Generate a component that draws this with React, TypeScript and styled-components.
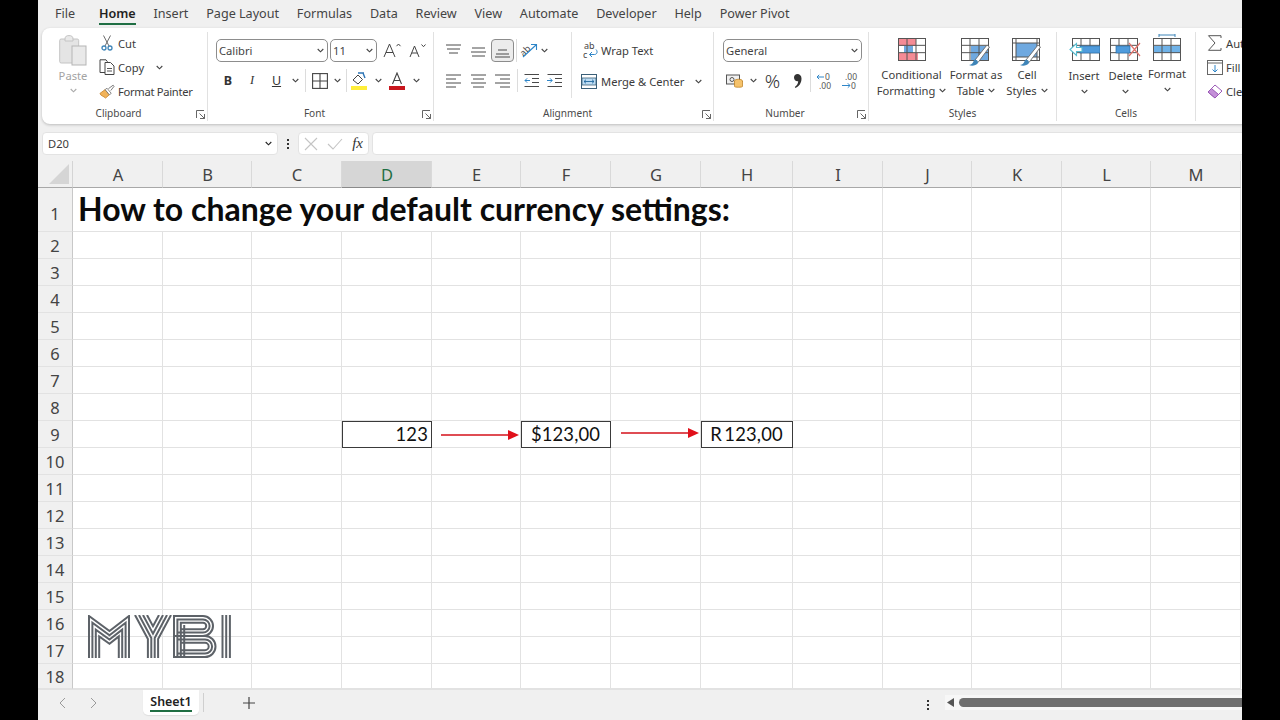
import React from "react";
import styled, { createGlobalStyle } from "styled-components";

const UI_FONT = `"Noto Sans", "Open Sans", sans-serif`;
const SHEET_FONT = `Lato, "Liberation Sans", sans-serif`;

const GlobalStyle = createGlobalStyle`
  html, body {
    margin: 0;
    height: 100%;
    background: #000;
    overflow: hidden;
  }
  * { box-sizing: border-box; }
`;

const Frame = styled.div`
  width: 1204px;
  height: 720px;
  margin-left: 38px;
  background: #f0f0f0;
  display: flex;
  flex-direction: column;
  overflow: hidden;
  font-family: ${UI_FONT};
  color: #3b3b3b;
`;

/* ---------- tabs ---------- */
const TabBar = styled.nav`
  height: 28px;
  flex: none;
  display: flex;
  gap: 17.8px;
  padding-left: 17px;
  align-items: stretch;
`;

const Tab = styled.div<{ $active?: boolean }>`
  font-size: 12.6px;
  line-height: 28px;
  white-space: nowrap;
  position: relative;
  font-weight: ${(p) => (p.$active ? 600 : 400)};
  color: ${(p) => (p.$active ? "#1f1f1f" : "#444")};
  &:first-child {
    margin-right: 6px;
  }
  &::after {
    content: "";
    display: ${(p) => (p.$active ? "block" : "none")};
    position: absolute;
    left: 0;
    right: 0;
    bottom: 3px;
    height: 2px;
    background: #1f6e43;
  }
`;

/* ---------- ribbon ---------- */
const Ribbon = styled.div`
  height: 96px;
  flex: none;
  width: 1240px;
  margin-left: 4px;
  padding: 4px 0 3px;
  display: flex;
  background: #fff;
  border-radius: 8px 0 0 8px;
  box-shadow: 0 1px 3px rgba(0, 0, 0, 0.22);
`;

const Group = styled.section<{ $w: number; $last?: boolean }>`
  width: ${(p) => p.$w}px;
  flex: none;
  display: flex;
  flex-direction: column;
  position: relative;
  border-right: ${(p) => (p.$last ? "none" : "1px solid #e1e1e1")};
`;

const GroupBody = styled.div<{ $pad?: number }>`
  flex: 1;
  min-height: 0;
  display: flex;
  padding-left: ${(p) => p.$pad ?? 0}px;
`;

const GroupLabel = styled.div<{ $launcher?: boolean }>`
  height: 17px;
  flex: none;
  padding-right: ${(p) => (p.$launcher ? 12 : 0)}px;
  padding-top: 1px;
  text-align: center;
  font-size: 10.1px;
  line-height: 17px;
  color: #4a4a4a;
`;

const Launcher = styled.span`
  position: absolute;
  right: 2px;
  bottom: 2px;
  width: 9px;
  height: 9px;
  display: flex;
`;

const PasteColumn = styled.div`
  width: 40px;
  display: flex;
  flex-direction: column;
  align-items: center;
  padding-top: 3px;
  color: #a3a3a3;
  font-size: 11.2px;
  line-height: 15px;
`;

const PasteText = styled.div`
  margin-top: 2px;
  margin-bottom: 5px;
`;

const ClipList = styled.div`
  margin: -1px 0 0 6px;
  display: flex;
  flex-direction: column;
`;

const ClipRow = styled.div`
  height: 24.5px;
  display: flex;
  align-items: center;
  gap: 3px;
  font-size: 11.2px;
  white-space: nowrap;
`;

const TightText = styled.span`
  letter-spacing: -0.3px;
`;

const ClipIcon = styled.span`
  width: 16px;
  height: 18px;
  display: flex;
  align-items: center;
  justify-content: center;
  flex: none;
`;

const Stack = styled.div<{ $pad?: number; $w?: number; $bordered?: boolean }>`
  display: flex;
  flex-direction: column;
  padding-top: 7px;
  padding-left: ${(p) => p.$pad ?? 0}px;
  width: ${(p) => (p.$w ? `${p.$w}px` : "auto")};
  height: ${(p) => (p.$bordered ? "66px" : "auto")};
  border-right: ${(p) => (p.$bordered ? "1px solid #e1e1e1" : "none")};
`;

const ToolRow = styled.div`
  height: 23px;
  display: flex;
  align-items: center;
  & + & {
    margin-top: 7px;
  }
`;

const Slot = styled.span<{ $w: number; $size?: number; $weight?: number; $italic?: boolean; $font?: string }>`
  width: ${(p) => p.$w}px;
  height: 23px;
  flex: none;
  display: flex;
  align-items: center;
  justify-content: center;
  font-size: ${(p) => p.$size ?? 12}px;
  font-weight: ${(p) => p.$weight ?? 400};
  font-style: ${(p) => (p.$italic ? "italic" : "normal")};
  font-family: ${(p) => p.$font ?? "inherit"};
  color: #333;
`;

const ActiveSlot = styled(Slot)`
  background: #ececec;
  border: 1px solid #8c8c8c;
  border-radius: 4px;
`;

const VRule = styled.span`
  width: 1px;
  height: 23px;
  background: #dcdcdc;
`;

const Select = styled.div<{ $w: number }>`
  width: ${(p) => p.$w}px;
  height: 23px;
  flex: none;
  padding: 0 3px 0 2px;
  display: flex;
  align-items: center;
  justify-content: space-between;
  border: 1px solid #8d8d8d;
  border-radius: 5px;
  background: #fff;
  font-size: 11.2px;
  color: #444;
`;

const WideRow = styled.div<{ $lead: number }>`
  height: 23px;
  display: flex;
  align-items: center;
  padding-left: ${(p) => p.$lead}px;
  font-size: 11.2px;
  white-space: nowrap;
  & + & {
    margin-top: 8px;
  }
`;

const WideText = styled.span<{ $left: number }>`
  margin-left: ${(p) => p.$left}px;
`;

const BigButton = styled.div<{ $w: number; $top?: number; $labelGap?: number }>`
  width: ${(p) => p.$w}px;
  flex: none;
  display: flex;
  flex-direction: column;
  align-items: center;
  padding-top: ${(p) => p.$top ?? 6}px;
  font-size: 11.2px;
  line-height: 15.5px;
  white-space: nowrap;
  text-align: center;
  & > svg {
    flex: none;
    margin-bottom: ${(p) => p.$labelGap ?? 5}px;
  }
`;

const BigChevron = styled.div`
  height: 15px;
  display: flex;
  align-items: center;
  justify-content: center;
  gap: 4px;
`;

const InlineLabel = styled.div`
  display: flex;
  align-items: center;
  gap: 4px;
`;

/* ---------- formula bar ---------- */
const FormulaBar = styled.div`
  height: 23px;
  flex: none;
  margin-top: 8px;
  padding-left: 4px;
  display: flex;
  align-items: stretch;
`;

const Field = styled.div<{ $w: string }>`
  width: ${(p) => p.$w};
  flex: none;
  background: #fff;
  border: 1px solid #e3e3e3;
  border-radius: 4px;
  display: flex;
  align-items: center;
  justify-content: space-between;
  font-size: 11.2px;
  padding: 0 5px;
`;

const Kebab = styled.div`
  width: 20px;
  flex: none;
  align-self: stretch;
  display: flex;
  flex-direction: column;
  align-items: center;
  justify-content: center;
  gap: 2px;
  & > i {
    width: 2px;
    height: 2px;
    background: #333;
  }
`;

const FormulaTail = styled(Field)`
  margin-left: 3px;
  border-radius: 4px 0 0 4px;
`;

const Fx = styled.span`
  font-family: "Liberation Serif", serif;
  font-style: italic;
  font-size: 15px;
  color: #333;
`;

/* ---------- sheet ---------- */
const COLUMNS = ["A", "B", "C", "D", "E", "F", "G", "H", "I", "J", "K", "L", "M"];
const WIDTHS = [90, 89, 90, 90, 89, 90, 90, 92, 90, 89, 90, 89, 90];
const TEMPLATE = `35px ${WIDTHS.map((w) => `${w}px`).join(" ")}`;
const ROW_HEIGHTS = `27px 44px repeat(16, 27px) 25px`;

const Sheet = styled.div`
  margin-top: 6px;
  height: 528px;
  flex: none;
  position: relative;
  display: grid;
  grid-template-columns: ${TEMPLATE};
  grid-template-rows: ${ROW_HEIGHTS};
  background: #fff;
  overflow: hidden;
`;

const Corner = styled.div`
  background: #f0f0f0;
  border-right: 1px solid #d4d4d4;
  border-bottom: 1px solid #a8a8a8;
  position: relative;
  &::after {
    content: "";
    position: absolute;
    right: 3px;
    bottom: 3px;
    border-style: solid;
    border-width: 0 0 20px 20px;
    border-color: transparent transparent #d5d5d5 transparent;
  }
`;

const ColHead = styled.div<{ $active?: boolean }>`
  display: flex;
  align-items: center;
  justify-content: center;
  padding-left: 1px;
  font-size: 16.5px;
  background: ${(p) => (p.$active ? "#d6d6d6" : "#f0f0f0")};
  color: ${(p) => (p.$active ? "#1f6e43" : "#444")};
  border-right: 1px solid #d9d9d9;
  border-bottom: 1px solid ${(p) => (p.$active ? "#8a8a8a" : "#a8a8a8")};
`;

const RowHead = styled.div<{ $tall?: boolean }>`
  display: flex;
  align-items: center;
  justify-content: center;
  padding-top: ${(p) => (p.$tall ? 7 : 0)}px;
  font-size: 16.5px;
  background: #f0f0f0;
  color: #444;
  border-right: 1px solid #c8c8c8;
  border-bottom: 1px solid #e2e2e2;
`;

const Cell = styled.div<{ $boxed?: boolean; $align?: string }>`
  display: flex;
  align-items: center;
  justify-content: ${(p) => p.$align ?? "center"};
  padding: 0 3px;
  font-family: ${SHEET_FONT};
  font-size: 18.4px;
  letter-spacing: 0.15px;
  color: #111;
  border-right: 1px solid #e2e2e2;
  border-bottom: 1px solid #e2e2e2;
  outline: ${(p) => (p.$boxed ? "1px solid #3a3a3a" : "none")};
  outline-offset: -1px;
`;

const TitleCell = styled.div`
  grid-column: span 8;
  display: flex;
  align-items: center;
  padding: 0 5px 2px;
  font-family: ${SHEET_FONT};
  font-size: 32px;
  font-weight: 700;
  color: #0b0b0b;
  white-space: nowrap;
  border-right: 1px solid #e2e2e2;
  border-bottom: 1px solid #e2e2e2;
`;

const ArrowMark = styled.div<{ $x: number; $y: number }>`
  position: absolute;
  display: flex;
  left: ${(p) => p.$x}px;
  top: ${(p) => p.$y}px;
`;

const LogoMark = styled.svg`
  position: absolute;
  left: 50px;
  top: 454px;
`;

/* ---------- sheet tabs ---------- */
const BottomBar = styled.div`
  height: 31px;
  flex: none;
  display: flex;
  align-items: flex-start;
  background: #f0f0f0;
  border-top: 1px solid #e2e2e2;
`;

const Nav = styled.span<{ $w: number }>`
  width: ${(p) => p.$w}px;
  height: 26px;
  flex: none;
  display: flex;
  align-items: center;
  justify-content: center;
`;

const SheetTab = styled.div`
  width: 56px;
  height: 25px;
  flex: none;
  margin-left: 15px;
  background: #fff;
  border-radius: 0 0 5px 5px;
  box-shadow: 0 1px 1px rgba(0, 0, 0, 0.08);
  display: flex;
  justify-content: center;
  font-size: 12.4px;
  font-weight: 600;
  line-height: 23px;
  color: #222;
`;

const SheetTabLabel = styled.span`
  height: 22px;
  border-bottom: 2px solid #1f6e43;
`;

const TabDivider = styled.span`
  width: 1px;
  height: 19px;
  margin: 3px 0 0 4px;
  background: #cfcfcf;
`;

const ScrollTrack = styled.div`
  margin-left: 7px;
  flex: 1;
  height: 15px;
  margin-top: 5px;
  background: #f7f7f7;
  display: flex;
  align-items: center;
  padding-left: 2px;
`;

const ScrollThumb = styled.div`
  flex: 1;
  height: 9px;
  margin-left: 5px;
  border-radius: 5px 0 0 5px;
  background: #6f6f6f;
`;

/* ---------- icons ---------- */
const Chevron = ({ color = "#444" }: { color?: string }) => (
  <svg width="7" height="5" viewBox="0 0 7 5" fill="none">
    <path d="M.7 1l2.8 2.8L6.3 1" stroke={color} strokeWidth="1.1" />
  </svg>
);

const LaunchIcon = () => (
  <svg width="9" height="9" viewBox="0 0 9 9" fill="none" stroke="#555" strokeWidth=".9">
    <path d="M.5 8V.5H8M8.5 8.5H4M8.5 8.5V4M8.5 8.5L3.5 3.5" />
  </svg>
);

const PasteIcon = () => (
  <svg width="28" height="31" viewBox="0 0 28 31" fill="none">
    <rect x=".7" y="4" width="19" height="24" rx="1.5" fill="#e4e4e4" stroke="#c4c4c4" />
    <path d="M6 4c0-3 2-3.4 4-3.4s4 .4 4 3.4v2H6z" fill="#e9e9e9" stroke="#c4c4c4" />
    <rect x="13" y="11" width="14" height="19" fill="#e9e9e9" stroke="#b5b5b5" />
  </svg>
);

const ScissorsIcon = () => (
  <svg width="12" height="16" viewBox="0 0 12 16" fill="none">
    <path d="M2.5 .5L8 11M9.5 .5L4 11" stroke="#6b6b6b" strokeWidth="1" />
    <circle cx="3" cy="13" r="2" stroke="#3f85b8" strokeWidth="1.3" />
    <circle cx="9" cy="13" r="2" stroke="#3f85b8" strokeWidth="1.3" />
  </svg>
);

const CopyIcon = () => (
  <svg width="16" height="16" viewBox="0 0 16 16" fill="none" stroke="#444" strokeWidth="1">
    <path d="M6 13.5H1V.8h6l1.5 2" />
    <path d="M6 3.5h5.5l3.5 3.5v8.5H6z" fill="#fff" />
    <path d="M8 9.5h5M8 12h5" strokeWidth=".9" />
  </svg>
);

const PainterIcon = () => (
  <svg width="17" height="15" viewBox="0 0 17 15" fill="none">
    <path d="M1 9.5l5.5-4 4.5 5.5-4 3.5C5 12.5 1.5 12 1 9.5z" fill="#f1b35a" stroke="#c47f23" strokeWidth=".8" />
    <path d="M6.5 5.5l2-1.5 4.5 5.5-2 1.500z" fill="#fff" stroke="#666" strokeWidth=".8" />
    <path d="M10 4.500L15 .8l1 1.200-3.500 4.500" fill="#fff" stroke="#666" strokeWidth=".9" />
  </svg>
);

const FontGrow = ({ up }: { up: boolean }) => (
  <svg width="19" height="15" viewBox="0 0 19 15" fill="none" stroke="#444">
    <path d={up ? "M1 14L6.5 1 12 14M3 9.5h7" : "M2 14L6.5 3 11 14M3.7 10h5.6"} strokeWidth="1" />
    <path d={up ? "M13.5 3.2L15.5 1l2 2.2" : "M13.5 1.5L15.5 3.7l2-2.2"} strokeWidth="1" />
  </svg>
);

const BordersIcon = () => (
  <svg width="16" height="16" viewBox="0 0 16 16" fill="none" stroke="#444" strokeWidth="1.1">
    <rect x=".6" y=".6" width="14.8" height="14.8" />
    <path d="M8 .6v14.8M.6 8h14.8" />
  </svg>
);

const FillIcon = () => (
  <svg width="16" height="18" viewBox="0 0 16 18" fill="none">
    <path d="M2 8l5-5 4.5 4.5-4.500 4.500z" stroke="#444" strokeWidth="1" fill="#fff" />
    <path d="M7 1l6 0M12 1l2 5" stroke="#2e75b6" strokeWidth="1.4" />
    <rect y="14" width="16" height="4" fill="#ffee3a" />
  </svg>
);

const ColorAIcon = () => (
  <svg width="16" height="18" viewBox="0 0 16 18" fill="none">
    <path d="M3.500 12L8 1l4.500 11M5 8.500h6" stroke="#444" strokeWidth="1.1" />
    <rect y="14" width="16" height="4" fill="#c8161d" />
  </svg>
);

const Lines = ({ ys, widths }: { ys: number[]; widths: [number, number][] }) => (
  <svg width="15" height="14" viewBox="0 0 15 14" fill="none" stroke="#4a4a4a" strokeWidth="1">
    {ys.map((y, i) => (
      <path key={y} d={`M${widths[i][0]} ${y}H${widths[i][1]}`} />
    ))}
  </svg>
);

const OrientIcon = () => (
  <svg width="18" height="17" viewBox="0 0 18 17" fill="none" overflow="visible">
    <text x="0" y="12" fontSize="9" fill="#444" fontFamily="Noto Sans, sans-serif" transform="rotate(-45 5 9)">ab</text>
    <path d="M3 15L16 3M11 2.500h5.500V8" stroke="#2e86c9" strokeWidth="1.1" />
  </svg>
);

const IndentIcon = ({ back }: { back: boolean }) => (
  <svg width="15" height="13" viewBox="0 0 15 13" fill="none" strokeWidth="1">
    <path d="M.5 .5H15M8 4.500H15M8 8.500H15M.5 12.500H15" stroke="#4a4a4a" />
    <path d={back ? "M6 6.500H1M3.200 4.300L1 6.500l2.200 2.200" : "M0 6.500H5M3 4.300l2.200 2.200L3 8.700"} stroke="#2e86c9" />
  </svg>
);

const WrapIcon = () => (
  <svg width="15" height="19" viewBox="0 0 15 19" fill="none" overflow="visible">
    <text x="1" y="8" fontSize="9" fill="#444" fontFamily="Noto Sans, sans-serif">ab</text>
    <text x="0" y="17" fontSize="9" fill="#444" fontFamily="Noto Sans, sans-serif">c</text>
    <path d="M13 8.500c2 2 1 5-1.500 5H6.500M9 11l-2.500 2.500L9 16" stroke="#2e86c9" strokeWidth="1" />
  </svg>
);

const MergeIcon = () => (
  <svg width="16" height="15" viewBox="0 0 16 15" fill="none">
    <rect x=".5" y=".5" width="15" height="14" fill="#fff" stroke="#3a5f78" />
    <rect x="1" y="4" width="14" height="7" fill="#bcdcf3" stroke="#3a5f78" strokeWidth=".8" />
    <path d="M3 7.500h10M5 5.700L3 7.500l2 1.800M11 5.700l2 1.800-2 1.800" stroke="#21689e" strokeWidth=".9" />
  </svg>
);

const AccountingIcon = () => (
  <svg width="17" height="15" viewBox="0 0 17 15" fill="none">
    <rect x=".5" y="2" width="13" height="9" fill="#f0f0f0" stroke="#555" />
    <circle cx="6" cy="6.500" r="2" stroke="#555" />
    <ellipse cx="12.500" cy="8" rx="4" ry="1.800" fill="#f5c26b" stroke="#b97a1a" strokeWidth=".7" />
    <path d="M8.500 8v5.500c0 1 8 1 8 0V8" fill="#f5c26b" stroke="#b97a1a" strokeWidth=".7" />
  </svg>
);

const CommaIcon = () => (
  <svg width="9" height="14" viewBox="0 0 9 14">
    <path d="M1 3.500C1 1.500 2.500 0 4.500 0S8.500 1.500 8.500 4.500C8.500 9 6 12.500 2.500 14L1.800 13C4 11.500 5 9.500 5.200 7.200 2.800 7.500 1 6 1 3.500z" fill="#333" />
  </svg>
);

const DecimalIcon = ({ more }: { more: boolean }) => (
  <svg width="17" height="18" viewBox="0 0 17 18" fill="none" overflow="visible">
    <text x={more ? 9 : 4} y="8" fontSize="8.500" fill="#555" fontFamily="Noto Sans, sans-serif">{more ? "0" : ".00"}</text>
    <text x={more ? 3 : 10} y="17" fontSize="8.500" fill="#555" fontFamily="Noto Sans, sans-serif">{more ? ".00" : "0"}</text>
    <path d={more ? "M8 5H1M3.200 2.800L1 5l2.200 2.200" : "M1 13.500h8M6.800 11.300L9 13.500l-2.200 2.200"} stroke="#2e86c9" strokeWidth="1" />
  </svg>
);

const TableFrame = ({ w = 27, h = 22 }: { w?: number; h?: number }) => (
  <g fill="none" stroke="#555" strokeWidth="1">
    <rect x=".5" y=".5" width={w} height={h} />
    <path d={`M${w / 3} .5V${h}M${(2 * w) / 3} .5V${h}M.5 ${h / 3}H${w}M.5 ${(2 * h) / 3}H${w}`} />
  </g>
);

const ConditionalIcon = () => (
  <svg width="28" height="23" viewBox="0 0 28 23">
    <rect x="1" y="1" width="17" height="7" fill="#f58b95" />
    <rect x="6" y="8" width="9" height="7" fill="#6fa9e0" />
    <rect x="1" y="15" width="19" height="7" fill="#f58b95" />
    <TableFrame />
  </svg>
);

const Brush = () => (
  <g>
    <path d="M14 22L26 7l2.500 2L17 24.500z" fill="#fff" stroke="#666" strokeWidth=".9" />
    <path d="M8 27c3-.5 4-2 5-5 2-1 4 0 4 3-2 2.500-6 3.500-9 2z" fill="#3f85b8" />
  </g>
);

const TableStyleIcon = () => (
  <svg width="30" height="28" viewBox="0 0 30 28">
    <rect x="10" y="8" width="17" height="15" fill="#6fa9e0" />
    <TableFrame />
    <Brush />
  </svg>
);

const CellStyleIcon = () => (
  <svg width="30" height="28" viewBox="0 0 30 28">
    <rect x="4" y="5" width="21" height="14" fill="#6fa9e0" />
    <g fill="none" stroke="#555">
      <rect x=".5" y=".5" width="27" height="22" />
      <path d="M.5 5H27M.5 19H27M4 1v21M25 1v21" />
    </g>
    <Brush />
  </svg>
);

const InsertCellsIcon = () => (
  <svg width="31" height="23" viewBox="0 0 31 23">
    <g transform="translate(3 0)">
      <TableFrame />
    </g>
    <rect x="11" y="8" width="20" height="7" fill="#4f9bdc" stroke="#2b6ea5" strokeWidth=".7" />
    <path d="M13 9.500H7.500V5.500L1 11.500l6.500 6v-4H13z" fill="#fff" stroke="#56bcd0" strokeWidth="1.100" />
  </svg>
);

const DeleteCellsIcon = () => (
  <svg width="31" height="23" viewBox="0 0 31 23">
    <TableFrame />
    <rect x="6" y="8" width="14" height="7" fill="#4f9bdc" stroke="#2b6ea5" strokeWidth=".7" />
    <path d="M19 5l11 13M30 5L19 18" fill="none" stroke="#e0736c" strokeWidth="1.200" />
  </svg>
);

const FormatCellsIcon = () => (
  <svg width="28" height="27" viewBox="0 0 28 27">
    <path d="M6 1H22M6 0v3M22 0v3" stroke="#3f85b8" strokeWidth="1" fill="none" />
    <g transform="translate(0 4)">
      <rect x="1" y="8" width="26" height="7" fill="#6fb2e8" />
      <TableFrame />
    </g>
  </svg>
);

const SigmaIcon = () => (
  <svg width="16" height="16" viewBox="0 0 16 16" fill="none" stroke="#555" strokeWidth="1">
    <path d="M14 3V.7H1.500L8 8 1.500 15.300H14V13" />
  </svg>
);

const FillDownIcon = () => (
  <svg width="16" height="15" viewBox="0 0 16 15" fill="none">
    <rect x=".5" y=".5" width="15" height="14" fill="#fff" stroke="#666" />
    <path d="M.5 3H15.500" stroke="#666" />
    <path d="M8 5v7M5.500 9.500L8 12l2.500-2.500" stroke="#2e86c9" />
  </svg>
);

const EraserIcon = () => (
  <svg width="16" height="15" viewBox="0 0 16 15">
    <path d="M1 8l7-7 7 6-7 7z" fill="#fff" stroke="#9b59b6" />
    <path d="M1 8l3.500-3.500 7 6L8 14z" fill="#c490d8" stroke="#9b59b6" />
  </svg>
);

const Arrow = ({ width }: { width: number }) => (
  <svg width={width} height="12" viewBox={`0 0 ${width} 12`}>
    <path d={`M0 6H${width - 9}`} stroke="#d4101a" strokeWidth="1.700" />
    <path d={`M${width - 11} 1l11 5-11 5z`} fill="#e0101a" />
  </svg>
);

const PITCH = 3.4;
const FOUR = [0, 1, 2, 3];
const THREE = [0, 1, 2];

const mStripe = (i: number) => {
  const x = 1 + PITCH * i;
  const top = 1 + 6.8 * i;
  const valley = 16 + 4.25 * i;
  const xr = 42 - x;
  return `M${x} 43V${top}L21.500 ${valley}L${xr} ${top}V43`;
};

const bStripe = (i: number) => {
  const o = PITCH * i;
  const l = 86 + o;
  const t = 1 + o;
  const r = 10 - o;
  const rr = 10.5 - o;
  return (
    `M${l} 43V${t}H115A${r} ${r} 0 0 1 115 ${21 - o}H${l}` +
    `M${l} ${21 + o}H117A${rr} ${rr} 0 0 1 117 ${42 - o}H${l}`
  );
};

const MyBILogo = () => (
  <LogoMark width="143" height="43" viewBox="0 0 143 43" fill="none" stroke="#5d6268" strokeWidth="2">
    {FOUR.map((i) => (
      <path key={`m${i}`} d={mStripe(i)} />
    ))}
    <path d="M47 0L59.900 24V43M51 0L63.300 23V43M79 0L66.700 23V43M83 0L70.100 24V43M55 0L65 18.600L75 0M59 0L65 11.200L71 0" />
    {THREE.map((i) => (
      <path key={`b${i}`} d={bStripe(i)} />
    ))}
    <path d={`M${86 + 3 * PITCH} 10V43`} />
    {THREE.map((i) => (
      <path key={`i${i}`} d={`M${134.500 + 3.700 * i} 0V43`} />
    ))}
  </LogoMark>
);

/* ---------- data ---------- */
const TABS = ["File", "Home", "Insert", "Page Layout", "Formulas", "Data", "Review", "View", "Automate", "Developer", "Help", "Power Pivot"];

const ROW_NINE: Record<string, { text: string; align: string }> = {
  D: { text: "123", align: "flex-end" },
  F: { text: "$123,00", align: "center" },
  H: { text: "R\u2009123,00", align: "center" },
};

const RibbonGroup = ({ w, label, launcher, last, pad, children }: {
  w: number;
  label: string;
  launcher?: boolean;
  last?: boolean;
  pad?: number;
  children: React.ReactNode;
}) => (
  <Group $w={w} $last={last}>
    <GroupBody $pad={pad}>{children}</GroupBody>
    <GroupLabel $launcher={launcher}>{label}</GroupLabel>
    {launcher && (
      <Launcher>
        <LaunchIcon />
      </Launcher>
    )}
  </Group>
);

export default function App() {
  return (
    <Frame>
      <GlobalStyle />
      <TabBar>
        {TABS.map((t) => (
          <Tab key={t} $active={t === "Home"}>{t}</Tab>
        ))}
      </TabBar>

      <Ribbon>
        <RibbonGroup w={166} label="Clipboard" launcher pad={11}>
          <PasteColumn>
            <PasteIcon />
            <PasteText>Paste</PasteText>
            <Chevron color="#aaa" />
          </PasteColumn>
          <ClipList>
            <ClipRow><ClipIcon><ScissorsIcon /></ClipIcon>Cut</ClipRow>
            <ClipRow><ClipIcon><CopyIcon /></ClipIcon>Copy<Slot $w={24}><Chevron /></Slot></ClipRow>
            <ClipRow><ClipIcon><PainterIcon /></ClipIcon><TightText>Format Painter</TightText></ClipRow>
          </ClipList>
        </RibbonGroup>

        <RibbonGroup w={226} label="Font" launcher>
          <Stack $pad={8}>
            <ToolRow>
              <Select $w={112}>Calibri<Chevron /></Select>
              <Slot $w={2} />
              <Select $w={47}>11<Chevron /></Select>
              <Slot $w={5} />
              <Slot $w={20}><FontGrow up /></Slot>
              <Slot $w={5} />
              <Slot $w={20}><FontGrow up={false} /></Slot>
            </ToolRow>
            <ToolRow>
              <Slot $w={24} $weight={700} $size={12.500}>B</Slot>
              <Slot $w={24} $italic $size={12.500} $font={`"Liberation Serif", serif`}>I</Slot>
              <Slot $w={25} $size={12.500}><u>U</u></Slot>
              <Slot $w={12}><Chevron /></Slot>
              <Slot $w={8}><VRule /></Slot>
              <Slot $w={21}><BordersIcon /></Slot>
              <Slot $w={15}><Chevron /></Slot>
              <Slot $w={3}><VRule /></Slot>
              <Slot $w={21}><FillIcon /></Slot>
              <Slot $w={18}><Chevron /></Slot>
              <Slot $w={20}><ColorAIcon /></Slot>
              <Slot $w={18}><Chevron /></Slot>
            </ToolRow>
          </Stack>
        </RibbonGroup>

        <RibbonGroup w={280} label="Alignment" launcher>
          <Stack $pad={7} $w={138} $bordered>
            <ToolRow>
              <Slot $w={25}><Lines ys={[1, 5, 9]} widths={[[0, 15], [1, 14], [3, 12]]} /></Slot>
              <Slot $w={25}><Lines ys={[4, 8, 12]} widths={[[1, 14], [0, 15], [1, 14]]} /></Slot>
              <ActiveSlot $w={23}><Lines ys={[6, 10, 13]} widths={[[3, 12], [1, 14], [0, 15]]} /></ActiveSlot>
              <Slot $w={5}><VRule /></Slot>
              <Slot $w={19}><OrientIcon /></Slot>
              <Slot $w={13}><Chevron /></Slot>
            </ToolRow>
            <ToolRow>
              <Slot $w={25}><Lines ys={[1, 5, 9, 13]} widths={[[0, 15], [0, 10], [0, 15], [0, 10]]} /></Slot>
              <Slot $w={25}><Lines ys={[1, 5, 9, 13]} widths={[[0, 15], [2, 13], [0, 15], [2, 13]]} /></Slot>
              <Slot $w={23}><Lines ys={[1, 5, 9, 13]} widths={[[0, 15], [5, 15], [0, 15], [5, 15]]} /></Slot>
              <Slot $w={6}><VRule /></Slot>
              <Slot $w={22}><IndentIcon back /></Slot>
              <Slot $w={25}><IndentIcon back={false} /></Slot>
            </ToolRow>
          </Stack>
          <Stack>
            <WideRow $lead={11}>
              <WrapIcon />
              <WideText $left={3}>Wrap Text</WideText>
            </WideRow>
            <WideRow $lead={9}>
              <MergeIcon />
              <WideText $left={4}>Merge &amp; Center</WideText>
              <Slot $w={28}><Chevron /></Slot>
            </WideRow>
          </Stack>
        </RibbonGroup>

        <RibbonGroup w={155} label="Number" launcher>
          <Stack $pad={9}>
            <ToolRow><Select $w={139}>General<Chevron /></Select></ToolRow>
            <ToolRow>
              <Slot $w={23}><AccountingIcon /></Slot>
              <Slot $w={14}><Chevron /></Slot>
              <Slot $w={25} $size={19} $weight={300}>%</Slot>
              <Slot $w={24}><CommaIcon /></Slot>
              <Slot $w={2}><VRule /></Slot>
              <Slot $w={26}><DecimalIcon more /></Slot>
              <Slot $w={24}><DecimalIcon more={false} /></Slot>
            </ToolRow>
          </Stack>
        </RibbonGroup>

        <RibbonGroup w={188} label="Styles" pad={7}>
          <BigButton $w={71} $labelGap={6}>
            <ConditionalIcon />
            Conditional
            <InlineLabel>Formatting<Chevron /></InlineLabel>
          </BigButton>
          <BigButton $w={58} $labelGap={1}>
            <TableStyleIcon />
            Format as
            <InlineLabel>Table<Chevron /></InlineLabel>
          </BigButton>
          <BigButton $w={44} $labelGap={1}>
            <CellStyleIcon />
            Cell
            <InlineLabel>Styles<Chevron /></InlineLabel>
          </BigButton>
        </RibbonGroup>

        <RibbonGroup w={139} label="Cells" pad={6}>
          <BigButton $w={42} $labelGap={7}>
            <InsertCellsIcon />
            Insert
            <BigChevron><Chevron /></BigChevron>
          </BigButton>
          <BigButton $w={41} $labelGap={7}>
            <DeleteCellsIcon />
            Delete
            <BigChevron><Chevron /></BigChevron>
          </BigButton>
          <BigButton $w={42} $top={2} $labelGap={5}>
            <FormatCellsIcon />
            Format
            <BigChevron><Chevron /></BigChevron>
          </BigButton>
        </RibbonGroup>

        <RibbonGroup w={60} label="" last pad={5}>
          <ClipList>
            <ClipRow><ClipIcon><SigmaIcon /></ClipIcon>AutoSum</ClipRow>
            <ClipRow><ClipIcon><FillDownIcon /></ClipIcon>Fill</ClipRow>
            <ClipRow><ClipIcon><EraserIcon /></ClipIcon>Clear</ClipRow>
          </ClipList>
        </RibbonGroup>
      </Ribbon>

      <FormulaBar>
        <Field $w="236px">D20<Chevron color="#222" /></Field>
        <Kebab><i /><i /><i /></Kebab>
        <Field $w="71px">
          <svg width="14" height="14" viewBox="0 0 14 14" fill="none" stroke="#c4c4c4" strokeWidth="1.1">
            <path d="M1 1l12 12M13 1L1 13" />
          </svg>
          <svg width="16" height="12" viewBox="0 0 16 12" fill="none" stroke="#c4c4c4" strokeWidth="1.1">
            <path d="M1 6l5 5L15 1" />
          </svg>
          <Fx>fx</Fx>
        </Field>
        <FormulaTail $w="900px" />
      </FormulaBar>

      <Sheet>
        <Corner />
        {COLUMNS.map((c) => (
          <ColHead key={c} $active={c === "D"}>{c}</ColHead>
        ))}
        {Array.from({ length: 18 }, (_, idx) => idx + 1).map((row) => (
          <React.Fragment key={row}>
            <RowHead $tall={row === 1}>{row}</RowHead>
            {row === 1 ? (
              <>
                <TitleCell>How to change your default currency settings:</TitleCell>
                {COLUMNS.slice(8).map((c) => <Cell key={c} />)}
              </>
            ) : (
              COLUMNS.map((c) => {
                const v = row === 9 ? ROW_NINE[c] : undefined;
                return (
                  <Cell key={c} $boxed={!!v} $align={v?.align}>{v?.text}</Cell>
                );
              })
            )}
          </React.Fragment>
        ))}
        <ArrowMark $x={403} $y={268}><Arrow width={78} /></ArrowMark>
        <ArrowMark $x={583} $y={266}><Arrow width={78} /></ArrowMark>
        <MyBILogo />
      </Sheet>

      <BottomBar>
        <Nav $w={48}>
          <svg width="7" height="12" viewBox="0 0 7 12" fill="none" stroke="#9a9a9a"><path d="M6 1L1 6l5 5" /></svg>
        </Nav>
        <Nav $w={14}>
          <svg width="7" height="12" viewBox="0 0 7 12" fill="none" stroke="#9a9a9a"><path d="M1 1l5 5-5 5" /></svg>
        </Nav>
        <Nav $w={28} />
        <SheetTab><SheetTabLabel>Sheet1</SheetTabLabel></SheetTab>
        <TabDivider />
        <Nav $w={90}>
          <svg width="12" height="12" viewBox="0 0 12 12" stroke="#444" strokeWidth="1.200"><path d="M6 0v12M0 6h12" /></svg>
        </Nav>
        <Nav $w={624} />
        <Kebab><i /><i /><i /></Kebab>
        <ScrollTrack>
          <svg width="7" height="9" viewBox="0 0 7 9"><path d="M7 0v9L0 4.500z" fill="#555" /></svg>
          <ScrollThumb />
        </ScrollTrack>
      </BottomBar>
    </Frame>
  );
}
